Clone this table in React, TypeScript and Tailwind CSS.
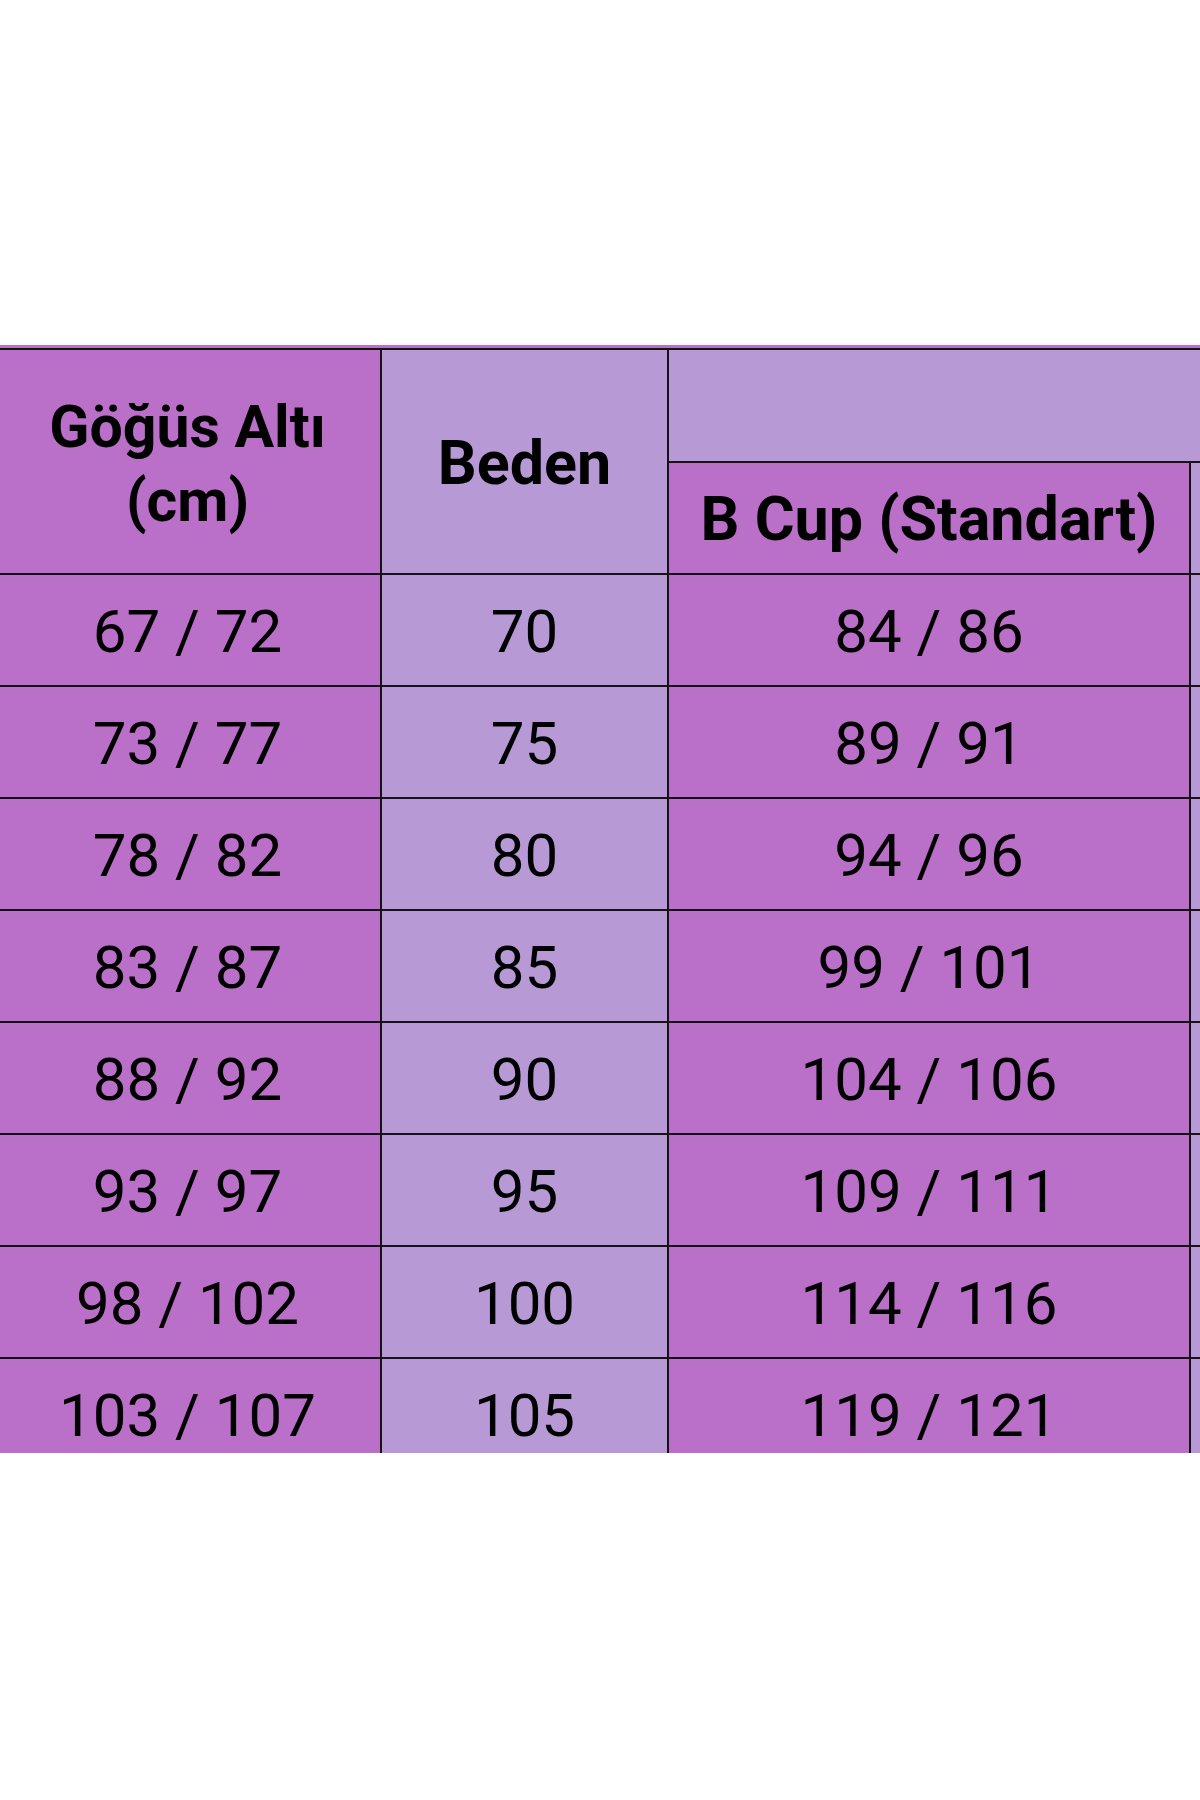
const rows = [
  ['67 / 72', '70', '84 / 86'],
  ['73 / 77', '75', '89 / 91'],
  ['78 / 82', '80', '94 / 96'],
  ['83 / 87', '85', '99 / 101'],
  ['88 / 92', '90', '104 / 106'],
  ['93 / 97', '95', '109 / 111'],
  ['98 / 102', '100', '114 / 116'],
  ['103 / 107', '105', '119 / 121'],
];

export default function App() {
  return (
    <div className="w-[1200px] h-[1800px] bg-white overflow-hidden" style={{ fontFamily: 'Roboto, "Noto Sans", sans-serif' }}>
      <div className="mt-[345px] h-[1108px] overflow-hidden border-t-[3px] border-[#ba6fc8]">
        <div className="ml-[-5px] w-[1500px] grid grid-cols-[385px_285px_520px_300px] grid-rows-[111px_110px_repeat(8,110px)] gap-[2px] pt-[2px] bg-[#141414] text-black">
          {/* Header */}
          <div className="row-span-2 bg-[#ba6fc8] flex items-center justify-center text-center font-bold text-[59px] leading-[74px] pt-[4px]">
            <span>Göğüs Altı<br />(cm)</span>
          </div>
          <div className="row-span-2 bg-[#b79ad5] flex items-center justify-center font-bold text-[61px] leading-none pt-[4px]">
            Beden
          </div>
          <div className="col-span-2 bg-[#b79ad5]"></div>
          <div className="bg-[#ba6fc8] flex items-center justify-center font-bold text-[61px] leading-none pt-[3px]">
            B Cup (Standart)
          </div>
          <div className="bg-[#b79ad5]"></div>

          {/* Rows */}
          {rows.map((r) => (
            <div key={r[0]} className="contents">
              <div className="bg-[#ba6fc8] flex items-center justify-center text-[60px] leading-none pt-[4px]">{r[0]}</div>
              <div className="bg-[#b79ad5] flex items-center justify-center text-[60px] leading-none pt-[4px]">{r[1]}</div>
              <div className="bg-[#ba6fc8] flex items-center justify-center text-[60px] leading-none pt-[4px]">{r[2]}</div>
              <div className="bg-[#b79ad5]"></div>
            </div>
          ))}
        </div>
      </div>
    </div>
  );
}
